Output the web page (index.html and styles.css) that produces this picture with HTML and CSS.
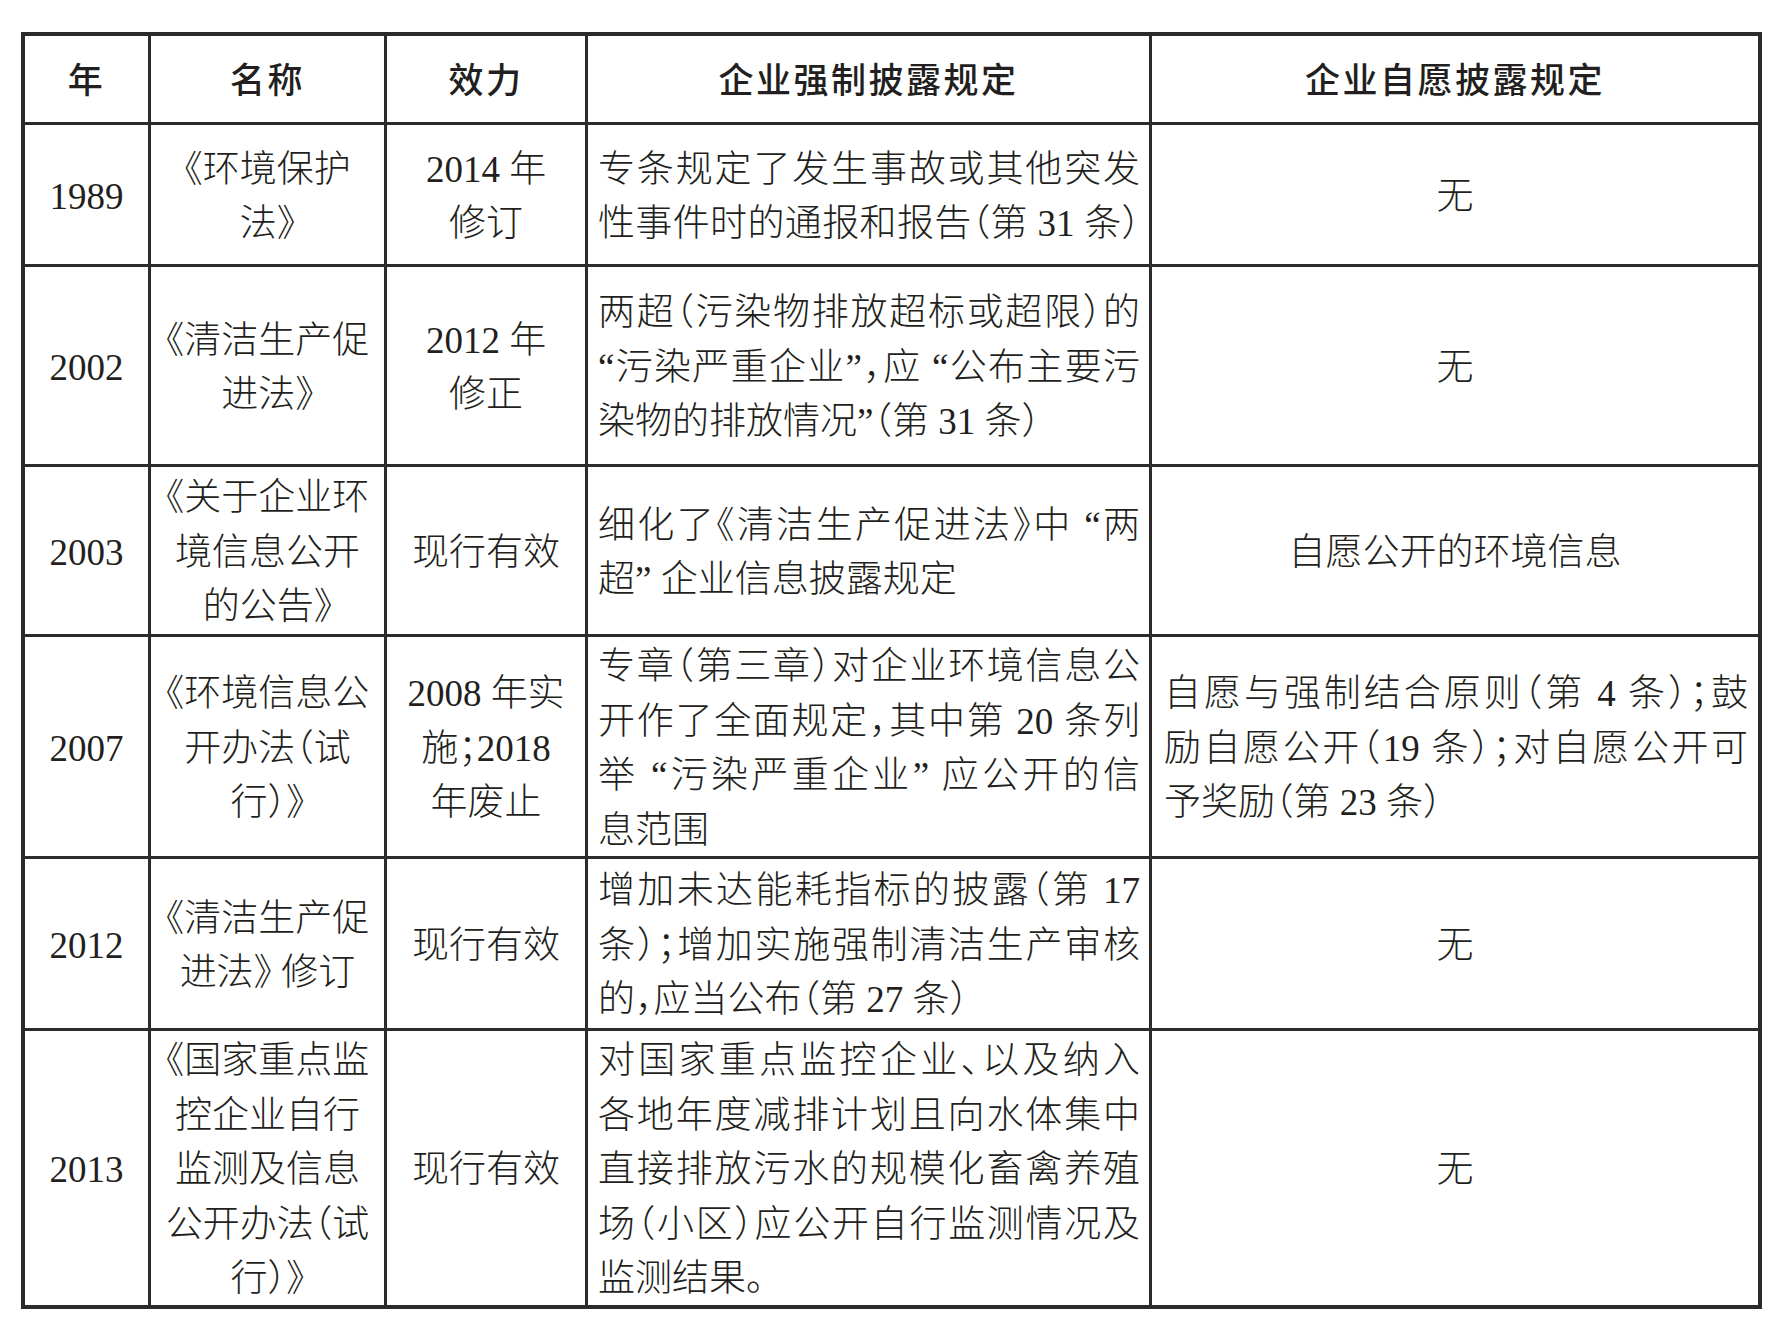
FILE: index.html
```html
<!DOCTYPE html>
<html lang="zh-CN">
<head>
<meta charset="utf-8">
<title>企业环境信息披露规定</title>
<link rel="stylesheet" href="styles.css">
</head>
<body>
<div class="table">
  <div class="cell head">年</div>
  <div class="cell head">名称</div>
  <div class="cell head">效力</div>
  <div class="cell head">企业强制披露规定</div>
  <div class="cell head">企业自愿披露规定</div>

  <div class="cell"><span class="ln">1989</span></div>
  <div class="cell"><span class="ln">《环境保护</span><span class="ln">法》</span></div>
  <div class="cell"><span class="ln">2014 年</span><span class="ln">修订</span></div>
  <div class="cell text"><span class="ln j">专条规定了发生事故或其他突发</span><span class="ln j">性事件时的通报和报告（第 31 条）</span></div>
  <div class="cell"><span class="ln">无</span></div>

  <div class="cell"><span class="ln">2002</span></div>
  <div class="cell"><span class="ln">《清洁生产促</span><span class="ln">进法》</span></div>
  <div class="cell"><span class="ln">2012 年</span><span class="ln">修正</span></div>
  <div class="cell text"><span class="ln j">两超（污染物排放超标或超限）的</span><span class="ln j">“污染严重企业”，应 “公布主要污</span><span class="ln">染物的排放情况”（第 31 条）</span></div>
  <div class="cell"><span class="ln">无</span></div>

  <div class="cell"><span class="ln">2003</span></div>
  <div class="cell"><span class="ln">《关于企业环</span><span class="ln">境信息公开</span><span class="ln">的公告》</span></div>
  <div class="cell"><span class="ln">现行有效</span></div>
  <div class="cell text"><span class="ln j">细化了《清洁生产促进法》中 “两</span><span class="ln">超” 企业信息披露规定</span></div>
  <div class="cell"><span class="ln">自愿公开的环境信息</span></div>

  <div class="cell"><span class="ln">2007</span></div>
  <div class="cell"><span class="ln">《环境信息公</span><span class="ln">开办法（试</span><span class="ln">行）》</span></div>
  <div class="cell"><span class="ln">2008 年实</span><span class="ln">施；2018</span><span class="ln">年废止</span></div>
  <div class="cell text"><span class="ln j">专章（第三章）对企业环境信息公</span><span class="ln j">开作了全面规定，其中第 20 条列</span><span class="ln j">举 “污染严重企业” 应公开的信</span><span class="ln">息范围</span></div>
  <div class="cell text wide"><span class="ln j">自愿与强制结合原则（第 4 条）；鼓</span><span class="ln j">励自愿公开（19 条）；对自愿公开可</span><span class="ln">予奖励（第 23 条）</span></div>

  <div class="cell"><span class="ln">2012</span></div>
  <div class="cell"><span class="ln">《清洁生产促</span><span class="ln">进法》 修订</span></div>
  <div class="cell"><span class="ln">现行有效</span></div>
  <div class="cell text"><span class="ln j">增加未达能耗指标的披露（第 17</span><span class="ln j">条）；增加实施强制清洁生产审核</span><span class="ln">的，应当公布（第 27 条）</span></div>
  <div class="cell"><span class="ln">无</span></div>

  <div class="cell"><span class="ln">2013</span></div>
  <div class="cell"><span class="ln">《国家重点监</span><span class="ln">控企业自行</span><span class="ln">监测及信息</span><span class="ln">公开办法（试</span><span class="ln">行）》</span></div>
  <div class="cell"><span class="ln">现行有效</span></div>
  <div class="cell text"><span class="ln j">对国家重点监控企业、以及纳入</span><span class="ln j">各地年度减排计划且向水体集中</span><span class="ln j">直接排放污水的规模化畜禽养殖</span><span class="ln j">场（小区）应公开自行监测情况及</span><span class="ln">监测结果。</span></div>
  <div class="cell"><span class="ln">无</span></div>
</div>
</body>
</html>
```

FILE: styles.css
```css
html, body {
  margin: 0;
  padding: 0;
  background: #ffffff;
}

body {
  font-family: "Liberation Serif", "Noto Sans CJK SC", serif;
  color: #231f20;
  font-size: 37px;
  font-weight: 300;
  font-feature-settings: "halt";
}

.table {
  display: grid;
  grid-template-columns: 123px 233px 198px 561px 606px;
  grid-template-rows: 86px 139px 197px 167px 219px 169px 274px;
  gap: 3px;
  padding: 4px;
  background: #2b2b2b;
  width: max-content;
  margin: 32px 0 0 21px;
}

.cell {
  background: #ffffff;
  display: flex;
  flex-direction: column;
  justify-content: center;
  align-items: center;
  text-align: center;
  line-height: 54.5px;
  white-space: nowrap;
  padding-top: 5px;
}

.head {
  font-family: "Noto Sans CJK SC", sans-serif;
  font-weight: 500;
  font-size: 35px;
  letter-spacing: 2.5px;
  font-feature-settings: normal;
  padding-top: 0;
  padding-bottom: 2px;
}

.ln {
  display: block;
}

.text {
  align-items: stretch;
  text-align: left;
  padding: 5px 9px 0 10px;
}

.text.wide {
  padding: 5px 10px 0 12px;
}

.j {
  text-align: justify;
  text-align-last: justify;
}
```
